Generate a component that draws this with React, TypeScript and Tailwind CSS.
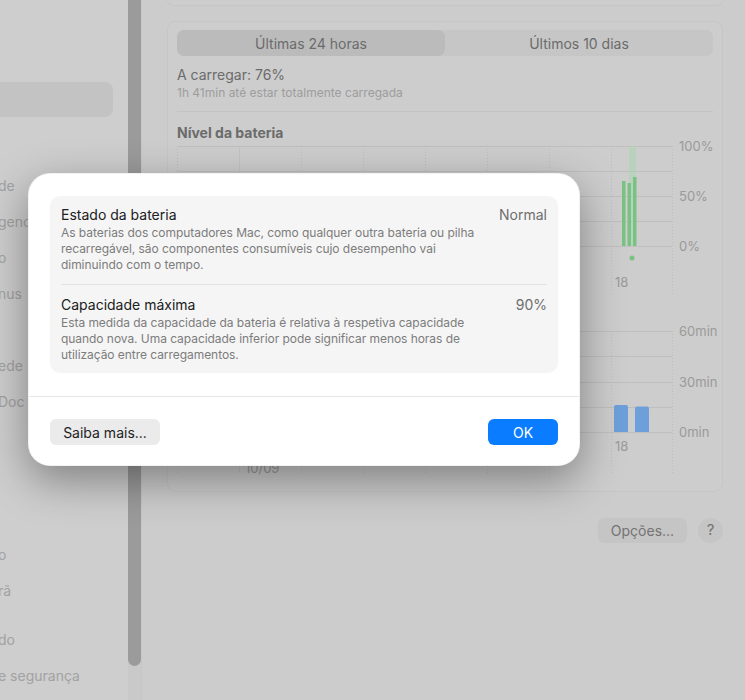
import React from 'react';

const sidebarRows: { text: string; className: string }[] = [
  { text: 'de', className: 'mt-[50px]' },
  { text: 'gencia', className: '' },
  { text: 'o', className: '' },
  { text: 'nus', className: '' },
  { text: '', className: '' },
  { text: 'ede', className: '' },
  { text: 'Doc', className: '' },
  { text: 'o', className: 'mt-[117px]' },
  { text: 'rã', className: '' },
  { text: 'do', className: 'mt-[13px]' },
  { text: 'e segurança', className: '' },
];

const gridX = [0, 62, 124, 186, 248, 310, 372, 434, 495];

const LevelChart: React.FC = () => (
  <svg width="536" height="150" className="overflow-visible block">
    {[0, 25, 50, 75, 100].map((y) => (
      <line key={y} x1="0" x2="495" y1={y + 0.5} y2={y + 0.5} stroke="#bfbfbf" />
    ))}
    {gridX.map((x, i) => (
      <line
        key={x}
        x1={x + 0.5}
        x2={x + 0.5}
        y1="0"
        y2="148"
        stroke={i === 1 ? '#c3c3c3' : '#bdbdbd'}
        strokeDasharray={i === 1 ? undefined : '1 2'}
      />
    ))}
    <rect x="452" y="0" width="7" height="100" fill="#acd6b0" opacity="0.55" />
    <rect x="445" y="35" width="3.5" height="65" fill="#78c381" />
    <rect x="450.5" y="37" width="3.5" height="63" fill="#78c381" />
    <rect x="456" y="31" width="3.5" height="69" fill="#78c381" />
    <circle cx="455" cy="112" r="2.5" fill="#78c381" />
    <text x="438" y="141" fontSize="13" fill="#9a9a9a">18</text>
    <text x="502" y="5" fontSize="13" fill="#9a9a9a">100%</text>
    <text x="502" y="55" fontSize="13" fill="#9a9a9a">50%</text>
    <text x="502" y="105" fontSize="13" fill="#9a9a9a">0%</text>
  </svg>
);

const UsageChart: React.FC = () => (
  <svg width="536" height="145" className="overflow-visible block">
    {[0, 25, 51, 76, 101].map((y) => (
      <line key={y} x1="0" x2="495" y1={y + 0.5} y2={y + 0.5} stroke="#bfbfbf" />
    ))}
    {gridX.map((x, i) => (
      <line
        key={x}
        x1={x + 0.5}
        x2={x + 0.5}
        y1="0"
        y2="142"
        stroke={i === 1 ? '#c3c3c3' : '#bdbdbd'}
        strokeDasharray={i === 1 ? undefined : '1 2'}
      />
    ))}
    <path d="M437 101 V76 a2 2 0 0 1 2 -2 h10 a2 2 0 0 1 2 2 V101 Z" fill="#6d9fda" />
    <path d="M458 101 V77.5 a2 2 0 0 1 2 -2 h10 a2 2 0 0 1 2 2 V101 Z" fill="#6d9fda" />
    <text x="438" y="120" fontSize="13" fill="#9a9a9a">18</text>
    <text x="68" y="142" fontSize="13" fill="#9a9a9a">10/09</text>
    <text x="502" y="5" fontSize="13" fill="#9a9a9a">60min</text>
    <text x="502" y="56" fontSize="13" fill="#9a9a9a">30min</text>
    <text x="502" y="106" fontSize="13" fill="#9a9a9a">0min</text>
  </svg>
);

const BatteryInfoDialog: React.FC = () => (
  <div className="absolute left-[28px] top-[173px] w-[552px] h-[293px] bg-white rounded-[22px] border border-black/5 shadow-[0_14px_44px_rgba(0,0,0,0.38)] flex flex-col overflow-hidden">
    <div className="px-[21px] pt-[22px]">
      <div className="bg-[#f5f5f5] rounded-[10px] px-[11px]">
        <div className="pt-[10px] pb-[11px] border-b border-[#e3e3e3]">
          <div className="flex justify-between text-[14px] leading-[18px]">
            <span className="text-[#202020]">Estado da bateria</span>
            <span className="text-[#6e6e6e]">Normal</span>
          </div>
          <p className="text-[12px] leading-[16px] tracking-[-0.05px] text-[#7c7c7c] mt-[1px] pr-[52px]">
            As baterias dos computadores Mac, como qualquer outra bateria ou pilha recarregável, são componentes consumíveis cujo desempenho vai diminuindo com o tempo.
          </p>
        </div>
        <div className="pt-[11px] pb-[10px]">
          <div className="flex justify-between text-[14px] leading-[18px]">
            <span className="text-[#202020]">Capacidade máxima</span>
            <span className="text-[#6e6e6e]">90%</span>
          </div>
          <p className="text-[12px] leading-[16px] tracking-[-0.05px] text-[#7c7c7c] mt-[1px] pr-[52px]">
            Esta medida da capacidade da bateria é relativa à respetiva capacidade quando nova. Uma capacidade inferior pode significar menos horas de utilização entre carregamentos.
          </p>
        </div>
      </div>
    </div>
    <div className="mt-[23px] border-t border-[#e6e6e6] flex justify-between px-[21px] pt-[22px]">
      <button className="w-[110px] h-[26px] rounded-[6px] bg-[#ebebeb] text-[14px] text-[#1f1f1f]">
        Saiba mais...
      </button>
      <button className="w-[70px] h-[26px] rounded-[6px] bg-[#0a7cff] text-[14px] text-white">
        OK
      </button>
    </div>
  </div>
);

export default function App() {
  return (
    <div className="relative w-[745px] h-[700px] overflow-hidden flex bg-[#cccccc] font-['Inter','Liberation_Sans',sans-serif]">
      {/* sidebar */}
      <div className="w-[128px] shrink-0 bg-[#cecece] overflow-hidden">
        <div className="mt-[82px] h-[35px] w-[113px] rounded-r-[8px] bg-[#c3c3c3]" />
        {sidebarRows.map((row, i) => (
          <div
            key={i}
            className={`h-[36px] flex items-center -ml-[2px] text-[14px] text-[#a2a2a2] whitespace-nowrap ${row.className}`}
          >
            {row.text}
          </div>
        ))}
      </div>

      {/* scroller */}
      <div className="w-[13px] shrink-0 bg-[#c9c9c9]">
        <div className="h-[666px] bg-[#9b9b9b] rounded-b-full" />
      </div>

      {/* main pane */}
      <div className="flex-1 border-l border-[#c6c6c6] pl-[25px] pr-[23px]">
        <div className="h-[6px] border-x border-b border-[#c6c6c6] rounded-b-[8px] bg-[#cdcdcd]" />
        <div className="mt-[15px] h-[471px] border border-[#c6c6c6] rounded-[9px] bg-[#cdcdcd] px-[9px] pt-[8px]">
          <div className="flex h-[26px] rounded-[7px] bg-[#c6c6c6] text-[14px] text-[#6b6b6b]">
            <div className="flex-1 flex items-center justify-center rounded-[7px] bg-[#bbbbbb]">
              Últimas 24 horas
            </div>
            <div className="flex-1 flex items-center justify-center">Últimos 10 dias</div>
          </div>
          <div className="mt-[10px] text-[14px] leading-[18px] text-[#6b6b6b]">A carregar: 76%</div>
          <div className="mt-[1px] text-[12px] leading-[16px] text-[#9d9d9d]">
            1h 41min até estar totalmente carregada
          </div>
          <div className="mt-[10px] border-t border-[#c3c3c3]" />
          <div className="mt-[12px] text-[14px] leading-[18px] font-bold text-[#6b6b6b]">
            Nível da bateria
          </div>
          <div className="mt-[4px]">
            <LevelChart />
          </div>
          <div className="mt-[35px]">
            <UsageChart />
          </div>
        </div>
        <div className="mt-[26px] flex justify-end items-center gap-[11px]">
          <button className="w-[89px] h-[25px] rounded-[6px] bg-[#c5c5c5] text-[14px] text-[#737373]">
            Opções...
          </button>
          <button className="w-[25px] h-[25px] rounded-full bg-[#c5c5c5] text-[15px] text-[#737373]">
            ?
          </button>
        </div>
      </div>

      <BatteryInfoDialog />
    </div>
  );
}
